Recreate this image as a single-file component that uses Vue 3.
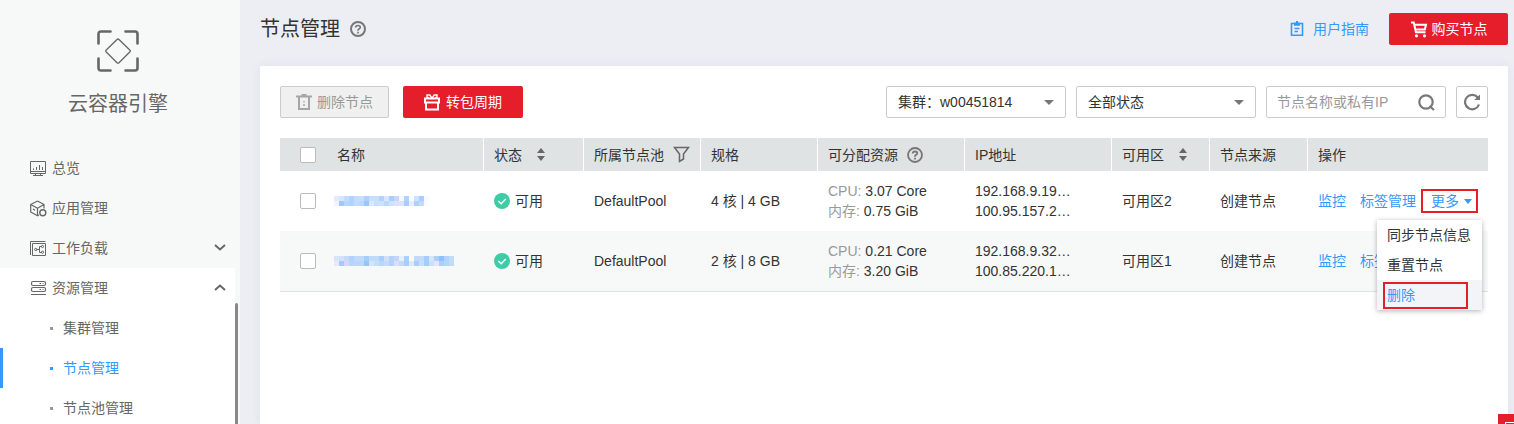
<script setup>
import { ref } from 'vue'

const menu = [
  { label: '总览', icon: 'overview' },
  { label: '应用管理', icon: 'app' },
  { label: '工作负载', icon: 'workload', arrow: 'down' },
]
const subMenu = [
  { label: '集群管理' },
  { label: '节点管理', active: true },
  { label: '节点池管理' },
]

const cluster = ref('w')
const status = ref('all')
const keyword = ref('')

const rows = [
  {
    id: 1,
    name: [
      ['#e2ecff', '#d9e5fd', '#c4dbff', '#b3d3ff', '#c4dcff', '#c6dffb', '#acd0ff', '#c5dffd', '#c5dffd', '#afd2ff', '#dbe7ff', '#a9cfff', '#c9d6fb', '#f3f8ff', '#b3d3ff', '#f9fcff', '#cfe3fd', '#a9cdff', '#f7fbff'],
      ['#f6f2ff', '#a2c6ff', '#b6d5ff', '#b3d3ff', '#c2dcff', '#b9d8ff', '#9ac7fd', '#d8e8ff', '#c7dfff', '#cbe1fd', '#b9d8ff', '#cce2ff', '#dfe0fc', '#dfe2fd', '#aacdff', '#e2f0fd', '#acd0ff', '#c5d9ff', '#f9fbff'],
    ],
    spec: '4 核 | 4 GB', cpu: '3.07 Core', mem: '0.75 GiB',
    ip: ['192.168.9.19…', '100.95.157.2…'], zone: '可用区2', open: true,
  },
  {
    id: 2,
    name: [
      ['#d6e6fa', '#d1e1f8', '#c8dafa', '#b2d2fb', '#bfdbfb', '#bfdbf8', '#a6cefb', '#bfdbfa', '#bfdbf8', '#a8cffc', '#cfe0f8', '#b3d3f9', '#c6d4fa', '#e5f1f8', '#abcffa', '#f5f9f8', '#c5d6fb', '#c2dbf8', '#a5cdfb', '#d6e6f8', '#aacff9', '#8fc0fb', '#b3d3fb', '#c1dbf8'],
      ['#ebe8f9', '#a6c8fc', '#d5d7f9', '#b6d5fb', '#b9d5fa', '#bcd8f8', '#95c5fb', '#d3e5f8', '#c5def8', '#b9d7fa', '#c2dbf9', '#b9cefb', '#dadffa', '#c8d6f9', '#a6cdfc', '#dceaf8', '#aacffb', '#c8dff8', '#a5cdfb', '#cbe0f8', '#e5e4f8', '#abcffb', '#b3d5fa', '#c1dbf8'],
    ],
    spec: '2 核 | 8 GB', cpu: '0.21 Core', mem: '3.20 GiB',
    ip: ['192.168.9.32…', '100.85.220.1…'], zone: '可用区1', open: false,
  },
]
</script>

<template>
  <div class="layout">
    <aside class="side">
      <div class="brand">
        <svg class="logo" width="42" height="42" viewBox="0 0 42 42" fill="none" stroke="#666" stroke-linecap="round" stroke-linejoin="round">
          <path stroke-width="2.6" d="M1.5 13.5V4Q1.5 1.5 4 1.5H13.5M28.500 1.500H38Q40.500 1.500 40.500 4V13.500M40.500 28.500V38Q40.500 40.500 38 40.500H28.500M13.500 40.500H4Q1.500 40.500 1.500 38V28.500" />
          <path stroke-width="1.3" d="M20 9.500Q21 8.500 22 9.500L33 20.300Q33.700 21 33 21.700L22 32.700Q21 33.700 20 32.700L9 21.700Q8.300 21 9 20.300Z" />
        </svg>
        <div class="brand-name">云容器引擎</div>
      </div>
      <nav>
        <a v-for="m in menu" :key="m.label" class="item" href="#">
          <svg v-if="m.icon === 'overview'" class="ico" width="17" height="17" viewBox="0 0 17 17" fill="none" stroke="#666">
            <path d="M.5 1.500H15.500V13.500H.5ZM.5 11.500H15.500M5.500 13.500V16M10.500 13.500V16M3 15.500H13M3.500 10V8.500M6.500 10V7M9.500 10V5M12.500 10V7" />
          </svg>
          <svg v-else-if="m.icon === 'app'" class="ico" width="17" height="17" viewBox="0 0 17 17" fill="none" stroke="#666" stroke-linejoin="round">
            <path d="M7.500 1L14 4.500V8.500M7.500 1L.7 4.500V12L7.500 15.800L9 15M.7 4.500L7.500 8.200L14 4.500M7.500 8.200V15.500M3 9L5 10.200" stroke-width="1.200" />
            <circle cx="12.800" cy="12.800" r="3" stroke-width="1.400" />
          </svg>
          <svg v-else class="ico" width="17" height="17" viewBox="0 0 17 17" fill="none" stroke="#666">
            <path d="M.5 15V1.500H15.500M2.500 3.500H15.500V15.500H2.500ZM6.500 9.500H9.500M12 6.500H9.500V12.500H12" />
            <circle cx="5.800" cy="9.500" r="1.200" /><circle cx="12.500" cy="6.500" r="1.100" /><circle cx="12.500" cy="12.200" r="1.100" />
          </svg>
          <span>{{ m.label }}</span>
          <svg v-if="m.arrow" class="chev" width="12" height="8" viewBox="0 0 12 8" fill="none" stroke="#666" stroke-width="2"><path d="M1 1L6 5.500L11 1" /></svg>
        </a>
        <div class="group">
          <a class="item" href="#">
            <svg class="ico" width="17" height="17" viewBox="0 0 17 17" fill="none" stroke="#666" stroke-width="1.200">
              <rect x="1.500" y="1.500" width="14" height="4" rx="1.500" /><rect x="1.500" y="7.500" width="14" height="4" rx="1.500" />
              <path d="M1 14.500H16M9.500 3.500H11M12.500 3.500H13.500M9.500 9.500H11M12.500 9.500H13.500" />
            </svg>
            <span>资源管理</span>
            <svg class="chev" width="12" height="8" viewBox="0 0 12 8" fill="none" stroke="#666" stroke-width="2"><path d="M1 6L6 1.500L11 6" /></svg>
          </a>
          <a v-for="s in subMenu" :key="s.label" class="sub" :class="{ active: s.active }" href="#">{{ s.label }}</a>
        </div>
      </nav>
      <div class="thumb"></div>
    </aside>

    <main class="main">
      <header class="head">
        <h1>节点管理</h1>
        <svg width="16" height="16" viewBox="0 0 16 16" fill="none" stroke="#777" stroke-width="2">
          <circle cx="8" cy="8" r="7" /><path d="M5.700 6.500Q5.700 4.500 8 4.500T10.300 6.300Q10.300 7.200 9 7.900T8 9.800M8 10.700V12.500" stroke-width="1.700" />
        </svg>
        <a class="guide" href="#">
          <svg width="14" height="16" viewBox="0 0 14 16" fill="none" stroke="#3399ff" stroke-width="1.600">
            <path d="M4 2.500H1.500V14.200H12.500V2.500H10" /><path d="M4 1.500H10V4.800H4ZM6 0H8V2H6Z" fill="#3399ff" stroke="none" /><path d="M4.500 7.500H9.500M4.500 10.500H8" stroke-width="1.400" />
          </svg>
          <span>用户指南</span>
        </a>
        <button class="btn red buy" type="button">
          <svg width="18" height="18" viewBox="0 0 18 18" fill="none" stroke="#fff" stroke-width="2">
            <path d="M1 2.500H3.700L6 12.200H15.500M4.500 4.800H16L14.800 9.500H5.800" /><circle cx="6.500" cy="15.800" r="1.600" fill="#fff" stroke="none" /><circle cx="14.500" cy="15.800" r="1.600" fill="#fff" stroke="none" />
          </svg>
          <span>购买节点</span>
        </button>
      </header>

      <section class="panel">
        <div class="tools">
          <button class="btn gray" type="button" disabled>
            <svg width="16" height="16" viewBox="0 0 16 16" fill="none" stroke="#a6a6a6" stroke-width="2">
              <path d="M0 2.500H16M6.500 2V.8H9.500V2M3 3V15H13V3" /><path d="M8 7V8.500M8 10V12" stroke-width="1.400" />
            </svg>
            <span>删除节点</span>
          </button>
          <button class="btn red cycle" type="button">
            <svg width="16" height="17" viewBox="0 0 16 17" fill="none" stroke="#fff" stroke-width="2">
              <path d="M1 4.500H15V8.500H1ZM2 8.500V15.500H14V8.500" /><path d="M8 4.200L5.800 1H3V3.200L5 4M8 4.200L10.200 1H13V3.200L11 4" stroke-width="1.400" />
            </svg>
            <span>转包周期</span>
          </button>
          <div class="filters">
            <div class="select">
              <select v-model="cluster" aria-label="集群"><option value="w">集群：w00451814</option></select>
            </div>
            <div class="select">
              <select v-model="status" aria-label="状态"><option value="all">全部状态</option></select>
            </div>
            <div class="search">
              <input v-model="keyword" type="text" placeholder="节点名称或私有IP" aria-label="节点名称或私有IP">
              <button type="button" aria-label="搜索">
                <svg width="17" height="17" viewBox="0 0 17 17" fill="none" stroke="#777" stroke-width="2.200"><circle cx="8" cy="8" r="6.700" /><path d="M11.500 12L16 16" /></svg>
              </button>
            </div>
            <button class="refresh" type="button" aria-label="刷新">
              <svg width="18" height="18" viewBox="0 0 18 18" fill="none" stroke="#777" stroke-width="2.200"><path d="M16 11.500A7.200 7.200 0 1 1 14.800 4.500L15.500 5.500" /><path d="M17 1.500V7H11.200Z" fill="#777" stroke="none" /></svg>
            </button>
          </div>
        </div>

        <table>
          <colgroup>
            <col class="c-check"><col><col class="c-100"><col class="c-117"><col class="c-117"><col class="c-147"><col class="c-147"><col class="c-98"><col class="c-98"><col class="c-op">
          </colgroup>
          <thead>
            <tr>
              <th class="check"><input type="checkbox" aria-label="全选"></th>
              <th class="plain">名称</th>
              <th><div class="th"><span>状态</span><i class="sort"></i></div></th>
              <th>
                <div class="th tight"><span>所属节点池</span>
                  <svg width="17" height="17" viewBox="0 0 17 17" fill="none" stroke="#666" stroke-width="1.500"><path d="M1.500 1.500H15.500L10.500 8V13L6.500 15.500V8Z" /></svg>
                </div>
              </th>
              <th>规格</th>
              <th>
                <div class="th tight"><span>可分配资源</span>
                  <svg width="16" height="16" viewBox="0 0 16 16" fill="none" stroke="#777" stroke-width="1.800">
                    <circle cx="8" cy="8" r="7" /><path d="M5.700 6.500Q5.700 4.500 8 4.500T10.300 6.300Q10.300 7.200 9 7.900T8 9.800M8 10.700V12.500" />
                  </svg>
                </div>
              </th>
              <th>IP地址</th>
              <th><div class="th"><span>可用区</span><i class="sort"></i></div></th>
              <th>节点来源</th>
              <th>操作</th>
            </tr>
          </thead>
          <tbody>
            <tr v-for="r in rows" :key="r.id">
              <td class="check"><input type="checkbox" :aria-label="'选择节点 ' + r.id"></td>
              <td class="name">
                <svg :width="r.name[0].length * 5" height="10" shape-rendering="crispEdges">
                  <template v-for="(line, y) in r.name" :key="y">
                    <rect v-for="(c, x) in line" :key="x" :x="x * 5" :y="y * 5" width="5" height="5" :fill="c" />
                  </template>
                </svg>
              </td>
              <td>
                <div class="ok">
                  <svg width="16" height="16" viewBox="0 0 16 16"><circle cx="8" cy="8" r="8" fill="#3dcca6" /><path d="M4.300 8L7.200 10.700L11.800 6" fill="none" stroke="#fff" stroke-width="1.400" /></svg>
                  <span>可用</span>
                </div>
              </td>
              <td>DefaultPool</td>
              <td>{{ r.spec }}</td>
              <td><span class="dim">CPU:</span> {{ r.cpu }}<br><span class="dim">内存:</span> {{ r.mem }}</td>
              <td>{{ r.ip[0] }}<br>{{ r.ip[1] }}</td>
              <td>{{ r.zone }}</td>
              <td>创建节点</td>
              <td>
                <div class="ops">
                  <a href="#">监控</a><a href="#">标签管理</a>
                  <div v-if="r.open" class="more">
                    <button class="more-btn" type="button">更多<i></i></button>
                    <div class="drop">
                      <button type="button">同步节点信息</button>
                      <button type="button">重置节点</button>
                      <button class="on" type="button"><span>删除</span></button>
                    </div>
                  </div>
                </div>
              </td>
            </tr>
          </tbody>
        </table>
      </section>
    </main>

    <button class="float" type="button" aria-label="反馈"><i></i></button>
  </div>
</template>

<style>
html, body { background: #edeef4; }
</style>

<style scoped>
* { box-sizing: border-box; }
.layout {
  display: flex;
  height: 100vh;
  overflow: hidden;
  font: 14px/20px "Liberation Sans", "Noto Sans CJK SC", sans-serif;
  color: #333;
}
svg { flex: none; display: block; }
button, input, select { font: inherit; color: inherit; margin: 0; }
a { color: #3399ff; text-decoration: none; }

.side { position: relative; flex: none; width: 240px; background: #f7f9f8; }
.brand { display: flex; flex-direction: column; align-items: center; height: 148px; padding: 30px 4px 0 0; }
.brand-name { margin-top: 17px; font-size: 20px; line-height: 30px; color: #666; }
.item { display: flex; align-items: center; height: 40px; padding: 0 14px 0 30px; color: #666; }
.ico { margin-right: 5px; }
.chev { margin-left: auto; }
.group { width: 235px; background: #fff; }
.group .item { padding-right: 9px; }
.sub { display: flex; align-items: center; height: 40px; padding-left: 47px; border-left: 3px solid transparent; color: #666; }
.sub::before { content: ""; width: 3px; height: 3px; margin-right: 10px; background: #999; }
.sub.active { color: #3399ff; border-color: #3399ff; }
.sub.active::before { background: #3399ff; }
.thumb { position: absolute; top: 303px; right: 2px; bottom: 0; width: 3px; background: #888; border-radius: 2px 2px 0 0; }

.main { flex: 1; min-width: 0; display: flex; flex-direction: column; padding: 0 6px 0 20px; }
.head { display: flex; align-items: center; height: 66px; padding-bottom: 8px; }
h1 { margin: 0 10px 0 0; font-size: 20px; line-height: 30px; font-weight: 400; }
.guide { display: flex; align-items: center; gap: 9px; margin-left: auto; margin-right: 20px; }
.btn { display: flex; align-items: center; justify-content: center; height: 32px; padding: 0; border: 0; border-radius: 2px; }
.red { background: #e61e2b; color: #fff; }
.buy { width: 119px; gap: 4px; }
.cycle { width: 120px; gap: 6px; margin-left: 14px; }
.gray { width: 109px; gap: 5px; border: 1px solid #ccc; background: #f0f0f0; color: #999; }

.panel { flex: 1; padding: 20px; background: #fff; border-radius: 2px 2px 0 0; box-shadow: 0 0 10px rgba(90, 100, 140, 0.1); }
.tools { display: flex; margin-bottom: 20px; }
.filters { display: flex; gap: 10px; margin-left: auto; }
.select { position: relative; width: 180px; height: 32px; }
.select select { appearance: none; width: 100%; height: 100%; padding: 0 30px 0 11px; border: 1px solid #ccc; border-radius: 2px; background: #fff; }
.select::after { content: ""; position: absolute; top: 14px; right: 12px; border: 5px solid transparent; border-top-color: #777; border-bottom: 0; pointer-events: none; }
.search { display: flex; align-items: center; width: 180px; height: 32px; border: 1px solid #ccc; border-radius: 2px; }
.search input { flex: 1; min-width: 0; height: 30px; padding: 0 0 0 10px; border: 0; outline: 0; background: none; }
.search input::placeholder { color: #999; opacity: 1; }
.search button { padding: 0 10px 0 0; border: 0; background: none; }
.refresh { display: grid; place-items: center; width: 32px; height: 32px; padding: 0; border: 1px solid #ccc; border-radius: 2px; background: #fff; }

table { width: 100%; table-layout: fixed; border-collapse: separate; border-spacing: 0; }
.c-check { width: 47px; }
.c-100 { width: 100px; }
.c-117 { width: 117px; }
.c-147 { width: 147px; }
.c-98 { width: 98px; }
.c-op { width: 181px; }
th { height: 33px; padding: 0 10px; background: #dfe3e3; border-left: 1px solid #fff; font-weight: 400; text-align: left; }
th.check, th.plain { border-left: 0; }
td { height: 60px; padding: 0 10px 0 11px; white-space: nowrap; }
tbody tr:nth-child(even) td { height: 61px; background: #f7f9f8; border-bottom: 1px solid #dfe3e3; }
th.check, td.check { padding: 0 0 0 20px; }
td.name { padding-left: 7px; }
input[type="checkbox"] { appearance: none; display: block; width: 16px; height: 16px; border: 1px solid #bbb; border-radius: 2px; background: #fff; }
.th { display: flex; align-items: center; gap: 15px; }
.th.tight { gap: 9px; white-space: nowrap; }
.sort { display: flex; flex-direction: column; gap: 3px; }
.sort::before, .sort::after { content: ""; border: 4px solid transparent; }
.sort::before { border-bottom: 5px solid #666; border-top: 0; }
.sort::after { border-top: 5px solid #666; border-bottom: 0; }
.ok { display: flex; align-items: center; gap: 5px; }
.dim { color: #999; }
.ops { display: flex; align-items: center; }
.ops a + a { margin-left: 14px; }
.more { position: relative; margin-left: 5px; }
.more-btn { display: flex; align-items: center; gap: 5px; width: 57px; height: 24px; padding: 0 0 0 8px; border: 2px solid #e61e2b; background: none; color: #3399ff; }
.more-btn i { border: 4px solid transparent; border-top: 5px solid #3399ff; border-bottom: 0; }
.drop { position: absolute; z-index: 2; top: 31px; right: -4px; width: 105px; background: #fff; box-shadow: 0 1px 5px rgba(0, 0, 0, 0.3); }
.drop button { display: flex; align-items: center; width: 100%; height: 30px; padding: 0 0 0 10px; border: 0; background: none; }
.drop .on { padding: 0 0 0 6px; background: #f2f4f7; color: #3399ff; }
.drop .on span { display: flex; align-items: center; width: 85px; height: 27px; padding-left: 2px; border: 2px solid #e61e2b; }

.float { position: fixed; right: 0; bottom: 0; width: 16px; height: 10px; padding: 8px 0 0 7px; border: 0; background: #e61e2b; overflow: hidden; }
.float i { display: block; height: 2px; border: 1px solid #fff; border-width: 1px 0 0 1px; }
</style>
